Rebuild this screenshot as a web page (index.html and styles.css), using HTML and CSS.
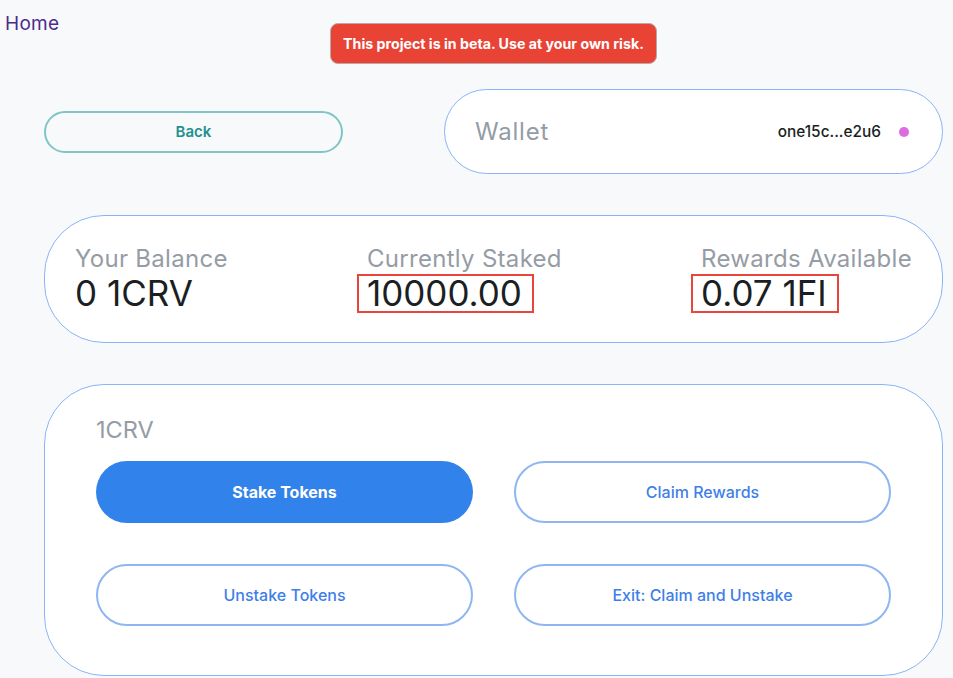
FILE: index.html
```html
<!DOCTYPE html>
<html lang="en">
<head>
<meta charset="utf-8">
<title>Staking</title>
<link rel="stylesheet" href="styles.css">
</head>
<body>
<header class="topbar">
  <a class="home" href="#">Home</a>
  <div class="beta">This project is in beta. Use at your own risk.</div>
</header>
<main class="page">
  <div class="toprow">
    <button class="back">Back</button>
    <section class="wallet">
      <span class="wallet-title">Wallet</span>
      <span class="wallet-addr">one15c...e2u6</span>
      <span class="dot"></span>
    </section>
  </div>
  <section class="card balances">
    <div class="stat">
      <div class="label">Your Balance</div>
      <div class="value">0 1CRV</div>
    </div>
    <div class="stat">
      <div class="label">Currently Staked</div>
      <div class="value hl">10000.00</div>
    </div>
    <div class="stat">
      <div class="label">Rewards Available</div>
      <div class="value hl">0.07 1FI</div>
    </div>
  </section>
  <section class="card actions">
    <div class="token">1CRV</div>
    <div class="btn-grid">
      <button class="btn primary">Stake Tokens</button>
      <button class="btn outline">Claim Rewards</button>
      <button class="btn outline">Unstake Tokens</button>
      <button class="btn outline">Exit: Claim and Unstake</button>
    </div>
  </section>
</main>
</body>
</html>
```

FILE: styles.css
```css
* { box-sizing: border-box; }
html, body { margin: 0; padding: 0; }
body {
  background: #f8f9fb;
  font-family: Inter, "Open Sans", "Liberation Sans", sans-serif;
  color: #1b1f24;
  width: 953px;
  height: 678px;
  overflow: hidden;
}
.topbar {
  display: flex;
  align-items: flex-start;
  padding: 13px 0 0 5px;
  height: 89px;
}
.home {
  width: 55px;
  font-size: 19px;
  line-height: 22px;
  letter-spacing: 0.3px;
  color: #4b2c8c;
  text-decoration: none;
}
.beta {
  margin-left: 270px;
  margin-top: 10px;
  width: 327px;
  height: 41px;
  background: #e94335;
  border: 1px solid #b9a9a9;
  border-radius: 8px;
  color: #fff;
  font-weight: 700;
  font-size: 14.2px;
  display: flex;
  align-items: center;
  justify-content: center;
}
.page {
  padding: 0 10px 0 44px;
  display: flex;
  flex-direction: column;
  gap: 41px;
}
.toprow {
  display: flex;
  align-items: center;
}
.back {
  width: 299px;
  height: 42px;
  margin-right: 101px;
  border: 2px solid #80c5c5;
  border-radius: 21px;
  background: transparent;
  color: #23908f;
  font-family: inherit;
  font-weight: 600;
  font-size: 15px;
  cursor: pointer;
}
.wallet {
  flex: 1;
  height: 85px;
  background: #fff;
  border: 1px solid #8ab4f8;
  border-radius: 43px;
  display: flex;
  align-items: center;
  padding: 0 33px 0 30px;
}
.wallet-title {
  flex: 1;
  font-size: 24px;
  letter-spacing: 0.8px;
  color: #959ca5;
}
.wallet-addr {
  font-size: 15.4px;
  font-weight: 500;
  color: #1b1f24;
}
.dot {
  width: 10px;
  height: 10px;
  border-radius: 50%;
  background: #de6ae0;
  margin-left: 18px;
}
.card {
  background: #fff;
  border: 1px solid #8ab4f8;
  border-radius: 60px;
}
.balances {
  height: 128px;
  display: flex;
  justify-content: space-between;
  padding: 28px 30px 0 30px;
}
.label {
  font-size: 24px;
  line-height: 30px;
  letter-spacing: 0.3px;
  color: #959ca5;
}
.value {
  font-size: 35px;
  line-height: 31px;
  padding: 2px 0 2px 0;
  border: 2px solid transparent;
  display: inline-block;
  color: #1b1f24;
}
.value.hl {
  border-color: #e8453c;
  margin-left: -10px;
  padding: 2px 10px 2px 8px;
}
.stat:first-child .value { margin-left: -2px; }
.actions {
  height: 292px;
  padding: 30px 51px 0 51px;
}
.token {
  font-size: 23.5px;
  line-height: 30px;
  color: #959ca5;
  margin-bottom: 16px;
}
.btn-grid {
  display: grid;
  grid-template-columns: 1fr 1fr;
  column-gap: 41px;
  row-gap: 41px;
}
.btn {
  height: 62px;
  border-radius: 31px;
  font-family: inherit;
  font-size: 16px;
  cursor: pointer;
}
.primary {
  background: #3182ea;
  border: none;
  color: #fff;
  font-weight: 700;
}
.outline {
  background: #fff;
  border: 2px solid #8fb6f1;
  color: #3f7fe8;
  font-weight: 500;
}
```
